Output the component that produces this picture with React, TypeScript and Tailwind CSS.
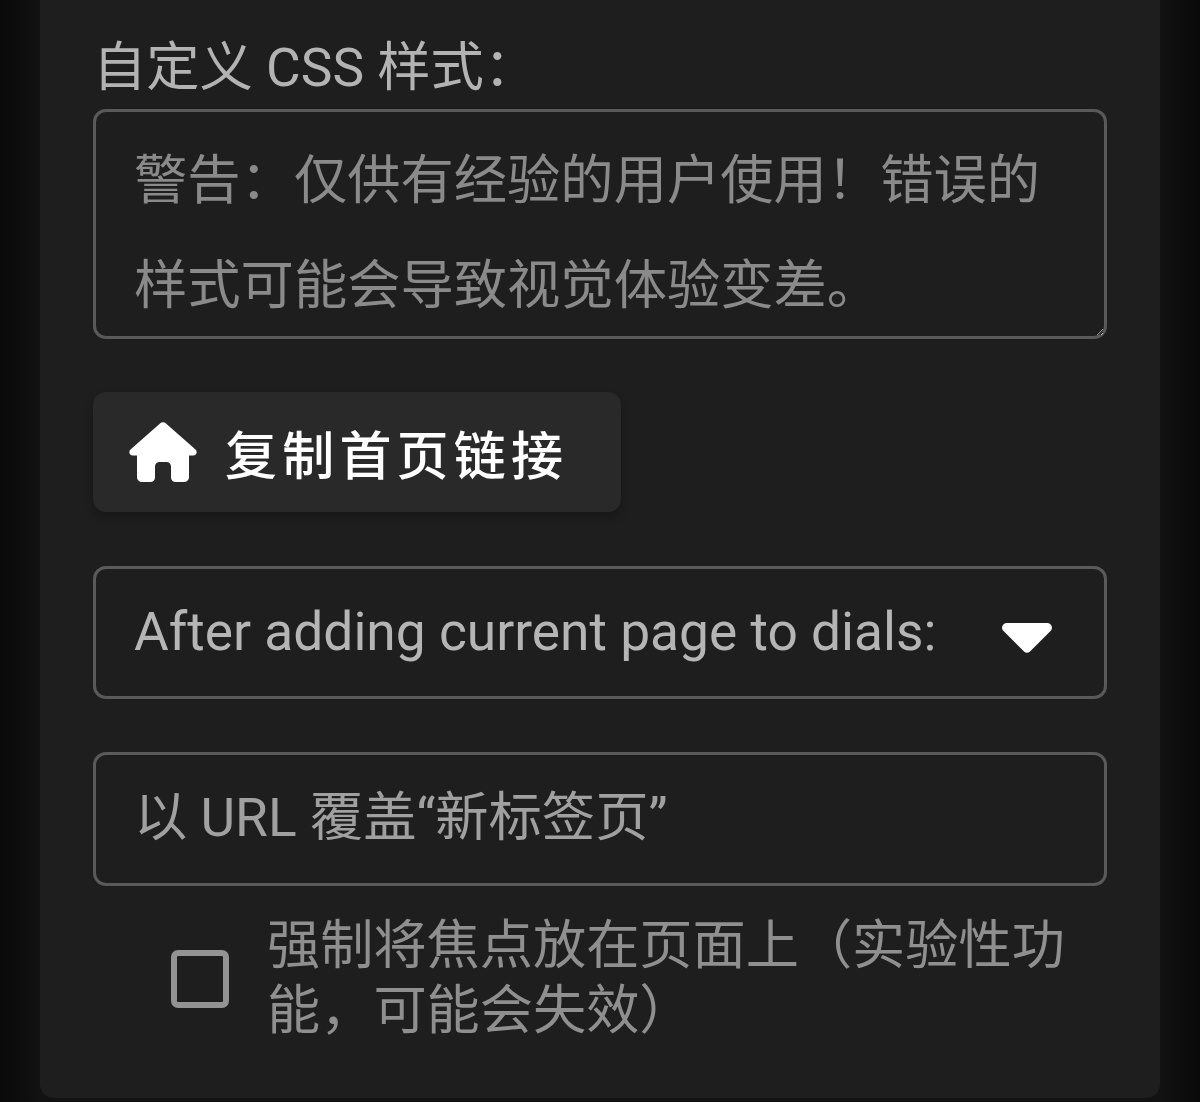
import React from 'react';

const font = "font-['Roboto','Noto_Sans_CJK_SC',sans-serif]";

const App = () => {
  return (
    <div className={`${font} h-[1102px] overflow-hidden bg-[linear-gradient(to_right,#090909,#121212_40px,#121212_1160px,#090909)]`}>
      <div className="mx-10 w-[1120px] h-[1098px] bg-[#1e1e1e] rounded-b-[14px] px-[53px] pt-[38px]">
        <label className="block text-[53.3px] leading-[60px] text-[#b3b3b3]">{'自定义 CSS 样式\uFF1A'}</label>
        <textarea
          className="block mt-[11px] w-[1014px] h-[230px] border-[3px] border-[#5a5a5a] rounded-[13px] bg-transparent px-[38px] pt-[17px] text-[53.3px] leading-[104.5px] outline-none placeholder:text-[#8a8a8a]"
          placeholder={'警告\uFF1A仅供有经验的用户使用\uFF01错误的样式可能会导致视觉体验变差\u3002'}
        />

        <button className="mt-[53px] w-[528px] h-[120px] flex items-center rounded-[13px] bg-[#292929] shadow-[0_5px_10px_rgba(0,0,0,0.25)] pl-[36px]">
          <svg width="68" height="60" viewBox="0 0 68 60" fill="#ffffff">
            <path d="M31 1.500a4.200 4.200 0 0 1 6 0l29.500 26c2.300 2.200 1 6-2.300 6H60v21.500c0 2.800-2 5-5 5H46.500c-2.500 0-4.500-2-4.500-4.500V44.500c0-2.500-2-4.500-4.500-4.500h-7c-2.500 0-4.500 2-4.500 4.500v11c0 2.500-2 4.500-4.500 4.500H13c-3 0-5-2.200-5-5V33.500H3.800c-3.300 0-4.600-3.800-2.300-6z" />
          </svg>
          <span className="ml-[28px] pt-[12px] text-[52px] leading-none tracking-[5.2px] text-white font-medium">复制首页链接</span>
        </button>

        <div className="mt-[54px] w-[1014px] h-[133px] border-[3px] border-[#5a5a5a] rounded-[13px] flex items-center justify-between pl-[38px] pr-[52px]">
          <span className="text-[53.3px] text-[#b5b5b5]">After adding current page to dials:</span>
          <svg className="mt-[10px]" width="50" height="30" viewBox="0 0 50 30" fill="#ffffff">
            <path d="M5 0h40c4.500 0 6.500 5 3.500 8L28 28.500a4.500 4.500 0 0 1-6 0L1.500 8C-1.500 5 .5 0 5 0z" />
          </svg>
        </div>

        <div className="mt-[53px] w-[1014px] h-[134px] border-[3px] border-[#5a5a5a] rounded-[13px] flex items-center pl-[38px] text-[53.3px] text-[#a0a0a0]">
          以 URL 覆盖“新标签页”
        </div>

        <div className="mt-[28px] flex items-center pl-[78px]">
          <span className="shrink-0 mb-[3px] w-[58px] h-[58px] border-[6px] border-[#939393] rounded-[7px]" />
          <span className="ml-[38px] mb-[3px] w-[820px] text-[53.2px] leading-[65px] text-[#8f8f8f]">
            {'强制将焦点放在页面上\uFF08实验性功能\uFF0C可能会失效\uFF09'}
          </span>
        </div>
      </div>
    </div>
  );
};

export default App;
